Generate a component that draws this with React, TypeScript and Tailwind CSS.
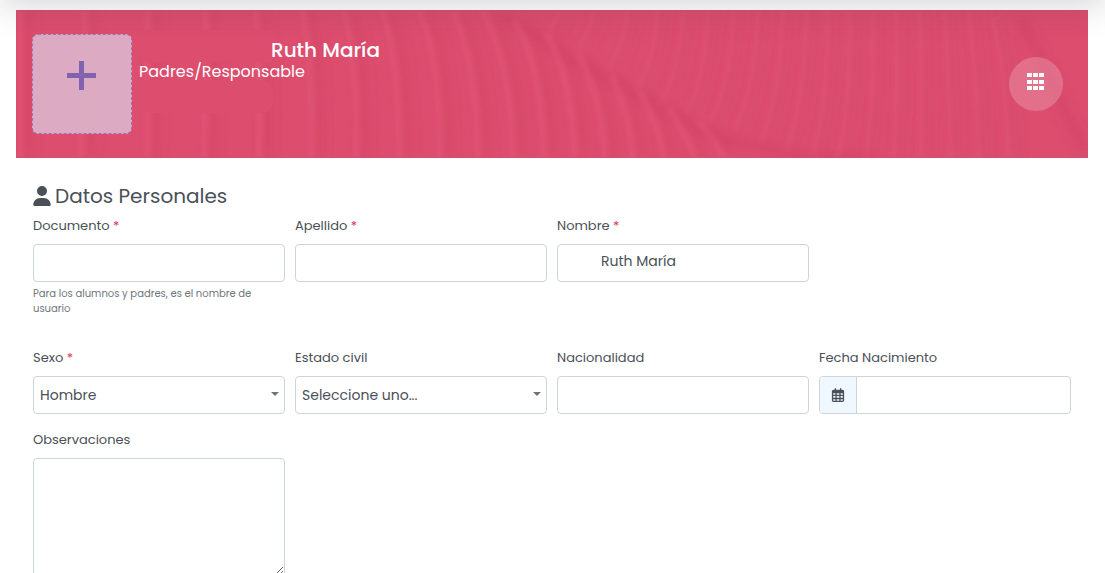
import { ReactNode } from "react";
import { FaRegCalendarDays, FaUser } from "react-icons/fa6";

const stripesLeft = [
    "M4 0 V148",
    "M68 0 C70 50 66 100 65 148",
    "M132 0 C130 50 132 100 131 148",
    "M189 0 C191 50 188 100 188 148",
    "M240 0 C244 50 243 100 243 148",
    "M286 0 C294 40 296 90 295 148",
    "M328 0 C338 40 341 90 340 148",
    "M366 0 C380 40 383 95 383 148",
    "M402 0 C418 30 424 90 424 148",
    "M437 0 C454 40 461 90 462 148",
    "M466 0 C486 36 496 90 497 148",
    "M498 10 C518 40 526 90 528 148",
    "M530 24 C550 55 557 100 559 148",
    "M562 44 C580 75 586 110 589 148",
    "M596 66 C610 95 614 120 617 148",
    "M624 82 C638 105 644 126 648 148",
    "M652 98 C666 118 674 132 678 148",
    "M682 112 C694 124 702 136 708 148",
];

const stripesRight = [
    "M542 0 C542 8 536 16 532 20",
    "M577 0 C575 18 568 30 560 38",
    "M611 0 C609 24 602 44 592 58",
    "M641 0 C639 34 632 62 620 80",
    "M667 0 C664 40 656 76 644 96",
    "M692 0 C690 44 682 84 670 104",
    "M717 0 C716 50 706 92 694 112",
    "M742 0 C740 56 730 98 718 120",
    "M766 0 C765 60 756 110 744 132",
    "M790 0 C790 60 780 116 770 140",
    "M812 0 C812 60 806 116 796 148",
    "M834 0 C834 60 830 116 822 148",
    "M857 0 C858 60 854 116 850 148",
    "M880 0 C881 60 880 110 877 148",
    "M903 0 C906 60 906 110 904 148",
    "M928 0 C932 60 934 110 934 148",
    "M952 0 C958 50 962 110 962 148",
    "M976 6 C986 50 992 110 992 148",
];

const BannerTexture = () => (
    <svg
        className="absolute inset-0 h-full w-full"
        viewBox="0 0 1072 148"
        preserveAspectRatio="none"
        fill="none"
        aria-hidden="true"
    >
        <defs>
            <filter id="soft" x="-5%" y="-5%" width="110%" height="110%">
                <feGaussianBlur stdDeviation="2" />
            </filter>
            <filter id="softer" x="-5%" y="-5%" width="110%" height="110%">
                <feGaussianBlur stdDeviation="5" />
            </filter>
        </defs>
        <g filter="url(#softer)" stroke="#cf4062" strokeWidth="12" strokeOpacity="0.28">
            {stripesLeft.map((d) => (
                <path key={d} d={d} transform="translate(9 0)" />
            ))}
            {stripesRight.map((d) => (
                <path key={d} d={d} transform="translate(8 0)" strokeOpacity="0.14" />
            ))}
            <path d="M486 4 L552 48 L620 84 L690 124 L780 146 L860 150" strokeOpacity="0.4" />
            <path d="M1004 8 L1026 50 L1050 104 L1070 142" strokeOpacity="0.35" />
        </g>
        <g filter="url(#soft)" stroke="#e75c7d" strokeWidth="6" strokeOpacity="0.36">
            {stripesLeft.map((d) => (
                <path key={d} d={d} />
            ))}
            {stripesRight.map((d) => (
                <path key={d} d={d} strokeOpacity="0.16" />
            ))}
        </g>
        <g fill="#dc4d6e">
            <rect x="122" y="20" width="142" height="32" rx="10" />
            <rect x="122" y="70" width="135" height="33" rx="12" />
        </g>
    </svg>
);

type FieldProps = {
    id: string;
    label: string;
    required?: boolean;
    children: ReactNode;
};

const Field = ({ id, label, required, children }: FieldProps) => (
    <div className="flex flex-col">
        <label htmlFor={id} className="mb-2 text-[13px] leading-5">
            {label}
            {required && <span className="text-[#dc3555]"> *</span>}
        </label>
        {children}
    </div>
);

const control = "w-full rounded border border-[#ced4da] bg-white text-sm text-[#495057] outline-none focus:border-[#8162b0]";

const SelectBox = ({ id, options }: { id: string; options: string[] }) => (
    <div className="relative">
        <select id={id} className={`${control} h-[38px] appearance-none pr-6 pl-[6px]`}>
            {options.map((option) => (
                <option key={option}>{option}</option>
            ))}
        </select>
        <svg className="pointer-events-none absolute top-4 right-1.5 h-1 w-2" viewBox="0 0 8 4" aria-hidden="true">
            <path d="M0 0H8L4 4Z" fill="#6c757d" />
        </svg>
    </div>
);

export default function App() {
    return (
        <div className="relative min-h-screen overflow-hidden bg-white pr-[17px] pl-4 font-['Poppins','Inter',sans-serif] text-[#495057]">
            <div className="pointer-events-none absolute inset-x-0 -top-10 z-10 h-10 shadow-[0_4px_36px_rgba(50,50,70,0.22)]" />

            <header className="relative mt-[10px] flex h-[148px] items-start bg-[#dc4d6e] px-4 pt-6 text-white">
                <BannerTexture />
                <button
                    type="button"
                    aria-label="Agregar foto"
                    className="relative flex size-[100px] shrink-0 justify-center rounded-md border border-dashed border-[#9d72b4] bg-[#dcb5cb]/90 pt-[26px]"
                >
                    <svg className="size-[30px]" viewBox="0 0 30 30" aria-hidden="true">
                        <path d="M0 14.5H29M14.5 0V29" stroke="#8162b0" strokeWidth="5" />
                    </svg>
                </button>
                <div className="relative ml-[7px] pt-1">
                    <h1 className="pl-[132px] text-[20px] leading-6 font-medium">Ruth María</h1>
                    <p className="text-base leading-5">Padres/Responsable</p>
                </div>
                <button
                    type="button"
                    aria-label="Menú"
                    className="relative mt-[23px] mr-[9px] ml-auto flex size-[54px] justify-center rounded-full bg-white/20 pt-4"
                >
                    <svg className="h-[17px] w-[18px]" viewBox="0 0 18 17" fill="#fff" aria-hidden="true">
                        {[0, 7, 13].map((y) =>
                            [0, 6, 12].map((x) => <rect key={`${x}-${y}`} x={x} y={y} width="5" height="4" />)
                        )}
                    </svg>
                </button>
            </header>

            <form className="px-[17px] pt-[26px]">
                <h2 className="flex items-center gap-1 text-[20px] leading-6">
                    <FaUser className="h-5 w-[18px]" />
                    Datos Personales
                </h2>

                <div className="mt-2 grid grid-cols-4 gap-x-[10px]">
                    <Field id="documento" label="Documento" required>
                        <input id="documento" type="text" className={`${control} h-[38px] px-3 pb-[3px]`} />
                        <small className="mt-1 text-[10px] leading-[15px] text-[#6c757d]">
                            Para los alumnos y padres, es el nombre de usuario
                        </small>
                    </Field>
                    <Field id="apellido" label="Apellido" required>
                        <input id="apellido" type="text" className={`${control} h-[38px] px-3 pb-[3px]`} />
                    </Field>
                    <Field id="nombre" label="Nombre" required>
                        <input
                            id="nombre"
                            type="text"
                            defaultValue="Ruth María"
                            className={`${control} h-[38px] pr-3 pb-[3px] pl-[43px]`}
                        />
                    </Field>
                </div>

                <div className="mt-8 grid grid-cols-4 gap-x-[10px] gap-y-4">
                    <Field id="sexo" label="Sexo" required>
                        <SelectBox id="sexo" options={["Hombre", "Mujer"]} />
                    </Field>
                    <Field id="estado" label="Estado civil">
                        <SelectBox id="estado" options={["Seleccione uno..."]} />
                    </Field>
                    <Field id="nacionalidad" label="Nacionalidad">
                        <input id="nacionalidad" type="text" className={`${control} h-[38px] px-3 pb-[3px]`} />
                    </Field>
                    <Field id="fecha" label="Fecha Nacimiento">
                        <div className="flex h-[38px] overflow-hidden rounded border border-[#ced4da]">
                            <span className="flex w-[37px] shrink-0 items-center justify-center border-r border-[#ced4da] bg-[#eff8ff]">
                                <FaRegCalendarDays size={14} />
                            </span>
                            <input id="fecha" type="text" className="w-full min-w-0 px-3 text-sm outline-none" />
                        </div>
                    </Field>
                    <Field id="observaciones" label="Observaciones">
                        <textarea id="observaciones" className={`${control} h-[118px] resize p-3`} />
                    </Field>
                </div>
            </form>
        </div>
    );
}
